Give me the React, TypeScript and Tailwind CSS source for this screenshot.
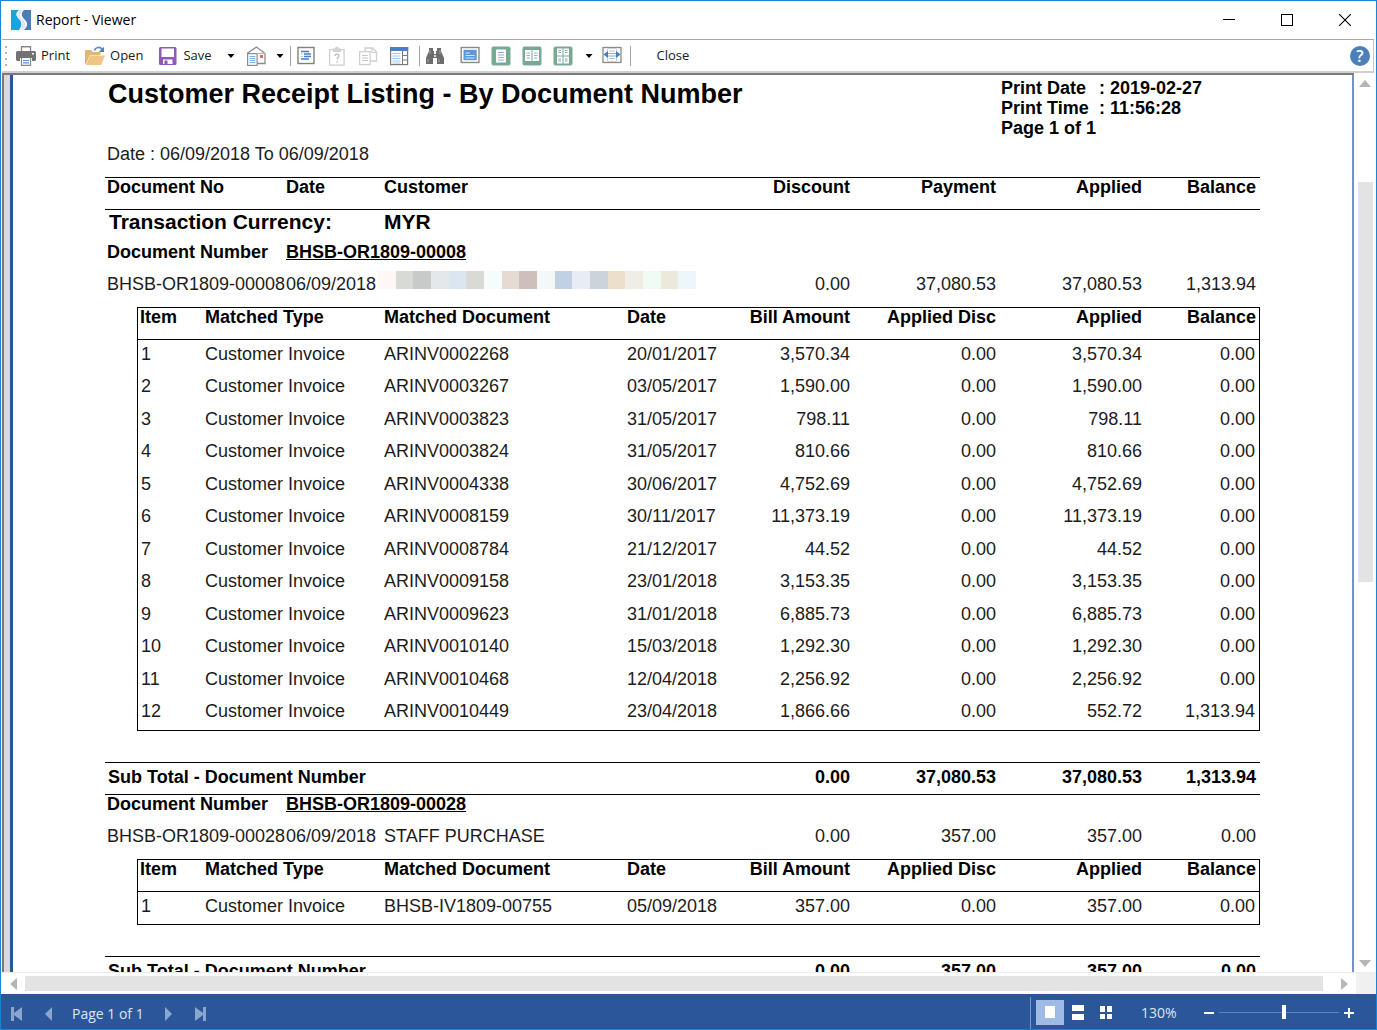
import { useState } from 'react'
import type { ReactNode } from 'react'
import clsx from 'clsx'

type MatchedRow = {
  type: string
  document: string
  date: string
  bill: string
  disc: string
  applied: string
  balance: string
}

type Receipt = {
  number: string
  date: string
  customer: string | null
  payment: string
  balance: string
  rows: MatchedRow[]
}

const invoice = (document: string, date: string, bill: string, applied = bill, balance = '0.00'): MatchedRow => ({
  type: 'Customer Invoice',
  document,
  date,
  bill,
  disc: '0.00',
  applied,
  balance,
})

const RECEIPTS: Receipt[] = [
  {
    number: 'BHSB-OR1809-00008',
    date: '06/09/2018',
    customer: null,
    payment: '37,080.53',
    balance: '1,313.94',
    rows: [
      invoice('ARINV0002268', '20/01/2017', '3,570.34'),
      invoice('ARINV0003267', '03/05/2017', '1,590.00'),
      invoice('ARINV0003823', '31/05/2017', '798.11'),
      invoice('ARINV0003824', '31/05/2017', '810.66'),
      invoice('ARINV0004338', '30/06/2017', '4,752.69'),
      invoice('ARINV0008159', '30/11/2017', '11,373.19'),
      invoice('ARINV0008784', '21/12/2017', '44.52'),
      invoice('ARINV0009158', '23/01/2018', '3,153.35'),
      invoice('ARINV0009623', '31/01/2018', '6,885.73'),
      invoice('ARINV0010140', '15/03/2018', '1,292.30'),
      invoice('ARINV0010468', '12/04/2018', '2,256.92'),
      invoice('ARINV0010449', '23/04/2018', '1,866.66', '552.72', '1,313.94'),
    ],
  },
  {
    number: 'BHSB-OR1809-00028',
    date: '06/09/2018',
    customer: 'STAFF PURCHASE',
    payment: '357.00',
    balance: '0.00',
    rows: [invoice('BHSB-IV1809-00755', '05/09/2018', '357.00')],
  },
]

// Hidden customer names are drawn as a strip of tinted blocks
const MOSAIC = [
  'bg-[#fdf8f5]', 'bg-[#d8dad6]', 'bg-[#c8caca]', 'bg-[#e5e8eb]', 'bg-[#dce6f0]', 'bg-[#d8dad6]',
  'bg-[#f6fbfc]', 'bg-[#e6dbd3]', 'bg-[#cebfbd]', 'bg-[#f3f9f8]', 'bg-[#c1d0e3]', 'bg-[#e8ecf5]',
  'bg-[#cdd3da]', 'bg-[#ecdfcb]', 'bg-[#f0ece6]', 'bg-[#f0fbf6]', 'bg-[#ece8da]', 'bg-[#edf6fa]',
]

function Icon({ children }: { children: ReactNode }) {
  return (
    <svg width="20" height="20" viewBox="0 0 20 20" fill="none" aria-hidden="true" className="shrink-0">
      {children}
    </svg>
  )
}

function AppLogo() {
  return (
    <svg width="20" height="20" viewBox="0 0 20 20" aria-hidden="true">
      <path d="M0 0H8C4 3 5 6 8 9S11 16 8 20H0Z" fill="#18a3e3" />
      <path d="M13 0H20V20H13C17 16 17 13 14 10S9 4 13 0Z" fill="#4b7db8" />
      <path d="M9 0H12C8 4 9 7 12 10S16 16 12 20H9.500C12 15 11 12 8.500 9S6 4 9 0Z" fill="#dfe7ee" />
    </svg>
  )
}

function PrintIcon() {
  return (
    <Icon>
      <path d="M5.500 5V.7H14.500V5" stroke="#8a8a8a" strokeWidth="1.400" />
      <path d="M1.500 5H18.500Q20 5 20 6.500V13.500Q20 15 18.500 15H16V12H4V15H1.500Q0 15 0 13.500V6.500Q0 5 1.500 5Z" fill="#737373" />
      <rect x="16" y="7" width="2" height="1.500" fill="#fff" />
      <path d="M5.500 12V19.300H14.500V12" fill="#fff" stroke="#8a8a8a" strokeWidth="1.200" />
      <path d="M7 14.500H13M7 16.800H13" stroke="#5b8fcb" strokeWidth="1.200" />
    </Icon>
  )
}

function OpenIcon() {
  return (
    <Icon>
      <path d="M0 18V5Q0 4 1 4H6L8 6H15.500V9H5L1 18Z" fill="#dfb877" />
      <path d="M1 19L5 9.500H20L16 19Z" fill="#efc584" />
      <path d="M9.500 4.500C10.500 1 15 .2 17.500 3.500" stroke="#5a8cc4" strokeWidth="1.600" />
      <path d="M19 .8V6H13.800Z" fill="#4f83bd" />
    </Icon>
  )
}

function SaveIcon() {
  return (
    <Icon>
      <rect x="1" y="1" width="17.500" height="18" rx="1.500" fill="#9059b5" />
      <rect x="3.500" y="2.500" width="12.500" height="8.500" fill="#fff" />
      <rect x="5" y="13.500" width="9.500" height="4.500" fill="#fff" />
      <rect x="6.500" y="14.500" width="3" height="3.500" fill="#9059b5" />
    </Icon>
  )
}

function MailIcon() {
  return (
    <Icon>
      <path d="M1 7.500L10.500 1L19 7.500V17.500H10" stroke="#8d8d8d" strokeWidth="1.300" />
      <rect x="1.600" y="7.600" width="9.500" height="11.800" fill="#fff" stroke="#8d8d8d" strokeWidth="1.200" />
      <path d="M3.500 10.500H9.500M3.500 12.500H9.500M3.500 14.500H9.500M3.500 16.500H9.500" stroke="#7fb0df" />
      <path d="M11 7.500H19" stroke="#b5b5b5" />
      <rect x="14" y="9" width="3" height="3" fill="#e8684a" />
    </Icon>
  )
}

function ParametersIcon() {
  return (
    <Icon>
      <rect x="2" y="1.500" width="16" height="16" stroke="#808080" strokeWidth="1.400" />
      <path d="M5 5.500H13M8 8H15M8 10.500H15M5 13H13" stroke="#3f7fc6" strokeWidth="1.400" />
      <path d="M5 8H7M5 10.500H7" stroke="#a9c9ea" strokeWidth="1.200" />
    </Icon>
  )
}

function ClipboardIcon() {
  return (
    <Icon>
      <rect x="2.600" y="3.600" width="14.500" height="15.500" stroke="#cfcfcf" strokeWidth="1.300" />
      <path d="M6 2.500H8Q8 .5 10 .5T12 2.500H14V6H6Z" fill="#d2d2d2" />
      <path d="M8 10Q8 8.200 10 8.200T12 10Q12 11 11 11.700T10 13.500M10 15V16.500" stroke="#c0c0c0" strokeWidth="1.400" />
    </Icon>
  )
}

function CopyIcon() {
  return (
    <Icon>
      <path d="M7 15V2H14.500L18.500 6V15H12" stroke="#cfcfcf" strokeWidth="1.300" />
      <path d="M14 2V6.500H18.500" stroke="#cfcfcf" strokeWidth="1.200" />
      <rect x="1.600" y="5.600" width="10.500" height="13" fill="#fff" stroke="#cfcfcf" strokeWidth="1.300" />
      <path d="M4 9.500H10M4 12H10M4 14.500H10" stroke="#c8c8c8" />
    </Icon>
  )
}

function ThumbnailsIcon() {
  return (
    <Icon>
      <rect x="1.600" y="1.600" width="17" height="17" fill="#fff" stroke="#7a7a7a" strokeWidth="1.200" />
      <rect x="1" y="1" width="18.200" height="4" fill="#4a80bf" />
      <path d="M13.500 5V18.500M13.500 9.500H19M13.500 14H19" stroke="#7a7a7a" />
      <path d="M3.500 7.500H11.500M3.500 10H11.500M3.500 12.500H11.500M3.500 15H11.500M3.500 17H11.500" stroke="#a8c9ea" />
    </Icon>
  )
}

function FindIcon() {
  return (
    <Icon>
      <path d="M4 2H8V5H9V8H11V5H12V2H16V5L19 12V18H12V12H8V18H1V12L4 5Z" fill="#6c6c6c" />
      <path d="M5 4V8M15 4V8M3 13V16.500M14 13V16.500" stroke="#a9a9a9" />
      <rect x="9" y="9" width="2" height="2" fill="#d9d9d9" />
    </Icon>
  )
}

function FullScreenIcon() {
  return (
    <Icon>
      <rect x="1.200" y="1.500" width="17.800" height="15" fill="#fff" stroke="#8a8a8a" strokeWidth="1.400" />
      <rect x="3.500" y="3.800" width="13.200" height="10.400" fill="#5c97dc" />
      <path d="M5.500 7H10M5.500 9.500H14.500M5.500 12H14.500" stroke="#d5e5f7" strokeWidth="1.200" />
    </Icon>
  )
}

function PagesIcon({ layout }: { layout: 'one' | 'two' | 'many' }) {
  return (
    <Icon>
      <rect x=".5" y=".5" width="19" height="19" rx="2" fill="#78a992" />
      {layout === 'one' && (
        <>
          <rect x="5" y="3.500" width="10" height="13" fill="#fff" />
          <path d="M7 6.500H13M7 9H13M7 11.500H13M7 14H13" stroke="#8fb3cf" />
        </>
      )}
      {layout === 'two' && (
        <>
          <path d="M3 4H9.500V15H3ZM10.500 4H17V15H10.500Z" fill="#fff" />
          <path d="M4.500 7H8M4.500 9.500H8M4.500 12H8M12 7H15.500M12 9.500H15.500M12 12H15.500" stroke="#8fb3cf" />
        </>
      )}
      {layout === 'many' && (
        <>
          <path d="M4 2.500H9.500V9.500H4ZM10.500 2.500H16V9.500H10.500ZM4 10.500H9.500V17.500H4ZM10.500 10.500H16V17.500H10.500Z" fill="#fff" />
          <path d="M5.500 4.500H8M5.500 6.500H8M12 4.500H14.500M12 6.500H14.500M5.500 13H8M5.500 15H8M12 13H14.500M12 15H14.500" stroke="#7fa3bf" />
        </>
      )}
    </Icon>
  )
}

function PageWidthIcon() {
  return (
    <Icon>
      <rect x="1" y="1.500" width="18" height="15" fill="#fff" stroke="#8a8a8a" strokeWidth="1.300" />
      <path d="M5.500 2.500H14.500V15.500H5.500Z" stroke="#cfcfcf" />
      <path d="M1.500 8.500L6 5V12ZM18.500 8.500L14 5V12Z" fill="#3f7fc6" />
      <path d="M6 7.500H14M6 10H14" stroke="#7fb0df" />
      <path d="M7 5H13M7 12.500H13" stroke="#a8c9ea" />
    </Icon>
  )
}

function ToolButton({ label, disabled, children }: { label: string; disabled?: boolean; children: ReactNode }) {
  return (
    <button type="button" aria-label={label} disabled={disabled} className="flex w-[31px] justify-center">
      {children}
    </button>
  )
}

function Caret({ label }: { label: string }) {
  return (
    <button type="button" aria-label={label} className="flex w-4 justify-center">
      <svg width="8" height="4" viewBox="0 0 8 4" aria-hidden="true">
        <path d="M0.500 0H7.500L4 4Z" fill="#000" />
      </svg>
    </button>
  )
}

function Separator() {
  return <span className="h-5 w-px bg-[#a3a3a3]" />
}

function TitleBar() {
  return (
    <header className="flex h-[38px] shrink-0 items-center pr-0.5 pl-2.5">
      <AppLogo />
      <h1 className="ml-[5px] flex-1 text-sm text-black">Report - Viewer</h1>
      <button type="button" aria-label="Minimize" className="flex w-[58px] justify-center">
        <svg width="12" height="12" aria-hidden="true"><path d="M0 5.500H12" stroke="#000" /></svg>
      </button>
      <button type="button" aria-label="Maximize" className="flex w-[58px] justify-center">
        <svg width="12" height="12" aria-hidden="true"><rect x=".5" y=".5" width="11" height="11" fill="none" stroke="#000" /></svg>
      </button>
      <button type="button" aria-label="Close window" className="flex w-[58px] justify-center">
        <svg width="12" height="12" aria-hidden="true"><path d="M0 0L12 12M12 0L0 12" stroke="#000" strokeWidth="1.100" /></svg>
      </button>
    </header>
  )
}

function Toolbar() {
  return (
    <div role="toolbar" className="mr-0.5 ml-px flex h-[34px] shrink-0 items-center border-t border-r border-b-2 border-t-[#a8a8a8] border-r-[#c8c8c8] border-b-[#d0d0d0] pr-[3px] pl-[3px] text-[13px] text-[#1a1a1a]">
      <span className="mr-[9px] flex flex-col gap-1">
        <i className="size-0.5 bg-[#b5b5b5]" />
        <i className="size-0.5 bg-[#b5b5b5]" />
        <i className="size-0.5 bg-[#b5b5b5]" />
        <i className="size-0.5 bg-[#b5b5b5]" />
      </span>
      <div className="flex gap-[15px]">
        <button type="button" className="flex items-center gap-[5px]"><PrintIcon />Print</button>
        <button type="button" className="flex items-center gap-[5px]"><OpenIcon />Open</button>
        <button type="button" className="flex items-center gap-[5px]"><SaveIcon />Save</button>
      </div>
      <div className="ml-[11px] flex items-center gap-0.5">
        <Caret label="Save options" />
        <ToolButton label="Send e-mail"><MailIcon /></ToolButton>
      </div>
      <Caret label="Send options" />
      <div className="ml-0.5 flex items-center">
        <Separator />
        <ToolButton label="Parameters"><ParametersIcon /></ToolButton>
        <ToolButton label="Bookmarks" disabled><ClipboardIcon /></ToolButton>
        <ToolButton label="Resources" disabled><CopyIcon /></ToolButton>
        <ToolButton label="Thumbnails"><ThumbnailsIcon /></ToolButton>
      </div>
      <div className="ml-1 flex items-center">
        <Separator />
        <ToolButton label="Find"><FindIcon /></ToolButton>
      </div>
      <div className="ml-1 flex items-center">
        <ToolButton label="Full screen"><FullScreenIcon /></ToolButton>
        <ToolButton label="One page"><PagesIcon layout="one" /></ToolButton>
        <ToolButton label="Two pages"><PagesIcon layout="two" /></ToolButton>
        <ToolButton label="Multiple pages"><PagesIcon layout="many" /></ToolButton>
      </div>
      <div className="ml-0.5 flex items-center">
        <Caret label="Page options" />
        <ToolButton label="Page width"><PageWidthIcon /></ToolButton>
      </div>
      <div className="ml-0.5 flex flex-1 items-center">
        <Separator />
        <button type="button" className="ml-[26px]">Close</button>
      </div>
      <button type="button" aria-label="Help" className="flex size-5 items-center justify-center rounded-full bg-[#4b7fba] text-base font-semibold text-white">
        ?
      </button>
    </div>
  )
}

const NUM = 'pr-0.5 text-right'
const LAST = 'pr-1 text-right'

function MatchedTable({ rows }: { rows: MatchedRow[] }) {
  const head = 'h-8 border-b border-black align-top leading-[18px]'
  return (
    <div className="ml-8 border border-black">
      <table className="w-full table-fixed border-separate border-spacing-0 text-left">
        <colgroup>
          <col className="w-[65px]" />
          <col className="w-[179px]" />
          <col />
          <col className="w-[120px]" />
          <col className="w-[107px]" />
          <col className="w-[146px]" />
          <col className="w-[146px]" />
          <col className="w-[115px]" />
        </colgroup>
        <thead>
          <tr>
            <th className={clsx(head, 'pl-0.5')}>Item</th>
            <th className={clsx(head, 'pl-0.5')}>Matched Type</th>
            <th className={clsx(head, 'pl-0.5')}>Matched Document</th>
            <th className={clsx(head, 'pl-0.5')}>Date</th>
            <th className={clsx(head, NUM)}>Bill Amount</th>
            <th className={clsx(head, NUM)}>Applied Disc</th>
            <th className={clsx(head, NUM)}>Applied</th>
            <th className={clsx(head, 'pr-[3px] text-right')}>Balance</th>
          </tr>
        </thead>
        <tbody className="align-top leading-7">
          {rows.map((row, i) => (
            <tr key={row.document} className="odd:h-8 even:h-[33px]">
              <td className="pl-[3px]">{i + 1}</td>
              <td className="pl-0.5">{row.type}</td>
              <td className="pl-0.5">{row.document}</td>
              <td className="pl-0.5">{row.date}</td>
              <td className={NUM}>{row.bill}</td>
              <td className={NUM}>{row.disc}</td>
              <td className={NUM}>{row.applied}</td>
              <td className={LAST}>{row.balance}</td>
            </tr>
          ))}
        </tbody>
      </table>
    </div>
  )
}

function ReceiptGroup({ receipt }: { receipt: Receipt }) {
  const total = 'h-[33px] border-y border-black align-top leading-7'
  return (
    <tbody>
      <tr className="leading-[18px]">
        <th className="pl-0.5">Document Number</th>
        <th colSpan={6} className="pl-0.5 underline">{receipt.number}</th>
      </tr>
      <tr className="leading-7">
        <td className="py-[9px] pl-0.5 whitespace-nowrap">{receipt.number}</td>
        <td className="pl-0.5">{receipt.date}</td>
        {receipt.customer ? (
          <td className="pl-1.5">{receipt.customer}</td>
        ) : (
          <td className="align-top pt-2.5">
            <div className="flex h-[18px] w-[318px]">
              {MOSAIC.map((color, i) => (
                <span key={i} className={clsx('flex-1', color)} />
              ))}
            </div>
          </td>
        )}
        <td className={NUM}>0.00</td>
        <td className={NUM}>{receipt.payment}</td>
        <td className={NUM}>{receipt.payment}</td>
        <td className={LAST}>{receipt.balance}</td>
      </tr>
      <tr>
        <td colSpan={7} className="pb-[31px]">
          <MatchedTable rows={receipt.rows} />
        </td>
      </tr>
      <tr>
        <th colSpan={3} className={clsx(total, 'pl-[3px]')}>Sub Total - Document Number</th>
        <th className={clsx(total, NUM)}>0.00</th>
        <th className={clsx(total, NUM)}>{receipt.payment}</th>
        <th className={clsx(total, NUM)}>{receipt.payment}</th>
        <th className={clsx(total, LAST)}>{receipt.balance}</th>
      </tr>
    </tbody>
  )
}

function ReportPage() {
  const head = 'h-[33px] border-y border-black align-top leading-[18px]'
  return (
    <article className="px-[92px] pt-px font-['Liberation_Sans',Arial,sans-serif] text-[18px] text-[#1c1c1c] [&_th]:text-left [&_th]:text-black [&_th.text-right]:text-right">
      <div className="flex justify-between text-black">
        <h2 className="pl-[3px] text-[27px] leading-9 font-bold whitespace-nowrap">
          Customer Receipt Listing - By Document Number
        </h2>
        <div className="w-[259px] pt-0.5 leading-5 font-bold">
          <dl className="grid grid-cols-[98px_1fr]">
            <dt>Print Date</dt>
            <dd>: 2019-02-27</dd>
            <dt>Print Time</dt>
            <dd>: 11:56:28</dd>
          </dl>
          <p>Page 1 of 1</p>
        </div>
      </div>
      <p className="pt-1.5 pb-[13px] pl-0.5 leading-5">Date : 06/09/2018 To 06/09/2018</p>
      <table className="w-full table-fixed border-separate border-spacing-0 text-left">
        <colgroup>
          <col className="w-[179px]" />
          <col className="w-[94px]" />
          <col />
          <col className="w-[140px]" />
          <col className="w-[146px]" />
          <col className="w-[146px]" />
          <col className="w-[116px]" />
        </colgroup>
        <thead>
          <tr>
            <th className={clsx(head, 'pl-0.5')}>Document No</th>
            <th className={clsx(head, 'pl-0.5')}>Date</th>
            <th className={clsx(head, 'pl-1.5')}>Customer</th>
            <th className={clsx(head, NUM)}>Discount</th>
            <th className={clsx(head, NUM)}>Payment</th>
            <th className={clsx(head, NUM)}>Applied</th>
            <th className={clsx(head, LAST)}>Balance</th>
          </tr>
        </thead>
        <tbody>
          <tr className="h-[33px] align-top text-[21px] leading-6">
            <th colSpan={2} className="pl-1">Transaction Currency:</th>
            <th colSpan={5} className="pl-1.5">MYR</th>
          </tr>
        </tbody>
        {RECEIPTS.map((receipt) => (
          <ReceiptGroup key={receipt.number} receipt={receipt} />
        ))}
      </table>
    </article>
  )
}

function ScrollArrow({ label, d, wide }: { label: string; d: string; wide?: boolean }) {
  return (
    <button type="button" aria-label={label} className="flex shrink-0 items-center justify-center">
      <svg width={wide ? 12 : 7} height={wide ? 7 : 12} aria-hidden="true">
        <path d={d} fill="#b5b5b5" />
      </svg>
    </button>
  )
}

function NavButton({ label, d }: { label: string; d: string }) {
  return (
    <button type="button" aria-label={label} className="flex w-8 justify-center">
      <svg width="12" height="14" aria-hidden="true">
        <path d={d} fill="#8aa5d2" />
      </svg>
    </button>
  )
}

function StatusBar() {
  const [zoom, setZoom] = useState(130)
  const [mode, setMode] = useState(0)
  const modes = [
    { label: 'Single page', d: 'M2 1H12V13H2Z' },
    { label: 'Continuous', d: 'M1 0H13V6H1ZM1 9H13V15H1Z' },
    { label: 'Multiple pages', d: 'M1 1H6V7H1ZM8 1H13V7H8ZM1 9H6V14H1ZM8 9H13V14H8Z' },
  ]

  return (
    <footer className="flex h-[35px] shrink-0 items-center bg-[#2b579a] text-sm text-[#dce5f3]">
      <div className="flex flex-1 items-center pt-1">
        <NavButton label="First page" d="M0 0H3V6L11 0V14L3 8V14H0Z" />
        <NavButton label="Previous page" d="M9 0V14L2 7Z" />
        <span className="mr-2 ml-[7px]">Page 1 of 1</span>
        <NavButton label="Next page" d="M3 0V14L10 7Z" />
        <NavButton label="Last page" d="M12 0H9V6L1 0V14L9 8V14H12Z" />
      </div>
      <div className="flex h-full items-center pt-0.5">
        <span className="mt-px w-px self-stretch bg-[#7f99c5]" />
        <div className="ml-[5px] flex">
          {modes.map((m, i) => (
            <button
              key={m.label}
              type="button"
              aria-label={m.label}
              aria-pressed={mode === i}
              onClick={() => setMode(i)}
              className={clsx('flex h-[25px] w-7 items-center justify-center', mode === i && 'bg-[#a0bae6]')}
            >
              <svg width="14" height="15" aria-hidden="true">
                <path d={m.d} fill="#fff" />
              </svg>
            </button>
          ))}
        </div>
        <span className="ml-[21px] w-[62px]">{zoom}%</span>
        <button type="button" aria-label="Zoom out" onClick={() => setZoom(zoom - 10)}>
          <svg width="12" height="12" aria-hidden="true"><path d="M1 6H11" stroke="#fff" strokeWidth="2" /></svg>
        </button>
        <input
          type="range"
          aria-label="Zoom"
          min={22}
          max={222}
          value={zoom}
          onChange={(e) => setZoom(Number(e.target.value))}
          className="mx-1 h-[15px] w-[120px] appearance-none bg-transparent [&::-webkit-slider-runnable-track]:h-px [&::-webkit-slider-runnable-track]:bg-[#6284bb] [&::-webkit-slider-thumb]:-mt-[7px] [&::-webkit-slider-thumb]:h-[14px] [&::-webkit-slider-thumb]:w-1 [&::-webkit-slider-thumb]:appearance-none [&::-webkit-slider-thumb]:bg-white"
        />
        <button type="button" aria-label="Zoom in" onClick={() => setZoom(zoom + 10)} className="mr-[21px]">
          <svg width="12" height="12" aria-hidden="true"><path d="M1 6H11M6 1V11" stroke="#fff" strokeWidth="2" /></svg>
        </button>
      </div>
    </footer>
  )
}

export default function App() {
  return (
    <div className="flex h-screen flex-col border border-[#1883d7] bg-white font-['Open_Sans','Segoe_UI',sans-serif]">
      <TitleBar />
      <Toolbar />
      <main className="flex min-h-0 flex-1">
        <div className="ml-px flex min-w-0 flex-1 border-t-2 border-l-2 border-[#7a7a7a]">
          <div className="w-1.5 shrink-0 bg-[#d4d9e2]" />
          <div className="min-w-0 flex-1 overflow-hidden border-r-2 border-l-3 border-r-[#7492c9] border-l-[#2b579a]">
            <ReportPage />
          </div>
        </div>
        <div className="flex w-[22px] shrink-0 flex-col pt-[7px] pb-[5px]">
          <ScrollArrow label="Scroll up" d="M0 7L6 0L12 7Z" wide />
          <div className="flex-1 pt-[95px]">
            <div className="mr-[3px] ml-1 h-[400px] max-h-full bg-[#e3e3e3]" />
          </div>
          <ScrollArrow label="Scroll down" d="M0 0H12L6 7Z" wide />
        </div>
      </main>
      <div className="flex h-[22px] shrink-0 border-t border-[#ececec]">
        <div className="flex flex-1 items-center gap-2 pr-2 pl-[9px]">
          <ScrollArrow label="Scroll left" d="M7 0V12L0 6Z" />
          <div className="mr-2.5 h-[15px] flex-1 bg-[#e3e3e3]" />
          <ScrollArrow label="Scroll right" d="M0 0V12L7 6Z" />
        </div>
        <div className="w-5 bg-[#f0f0f0]" />
      </div>
      <StatusBar />
    </div>
  )
}
